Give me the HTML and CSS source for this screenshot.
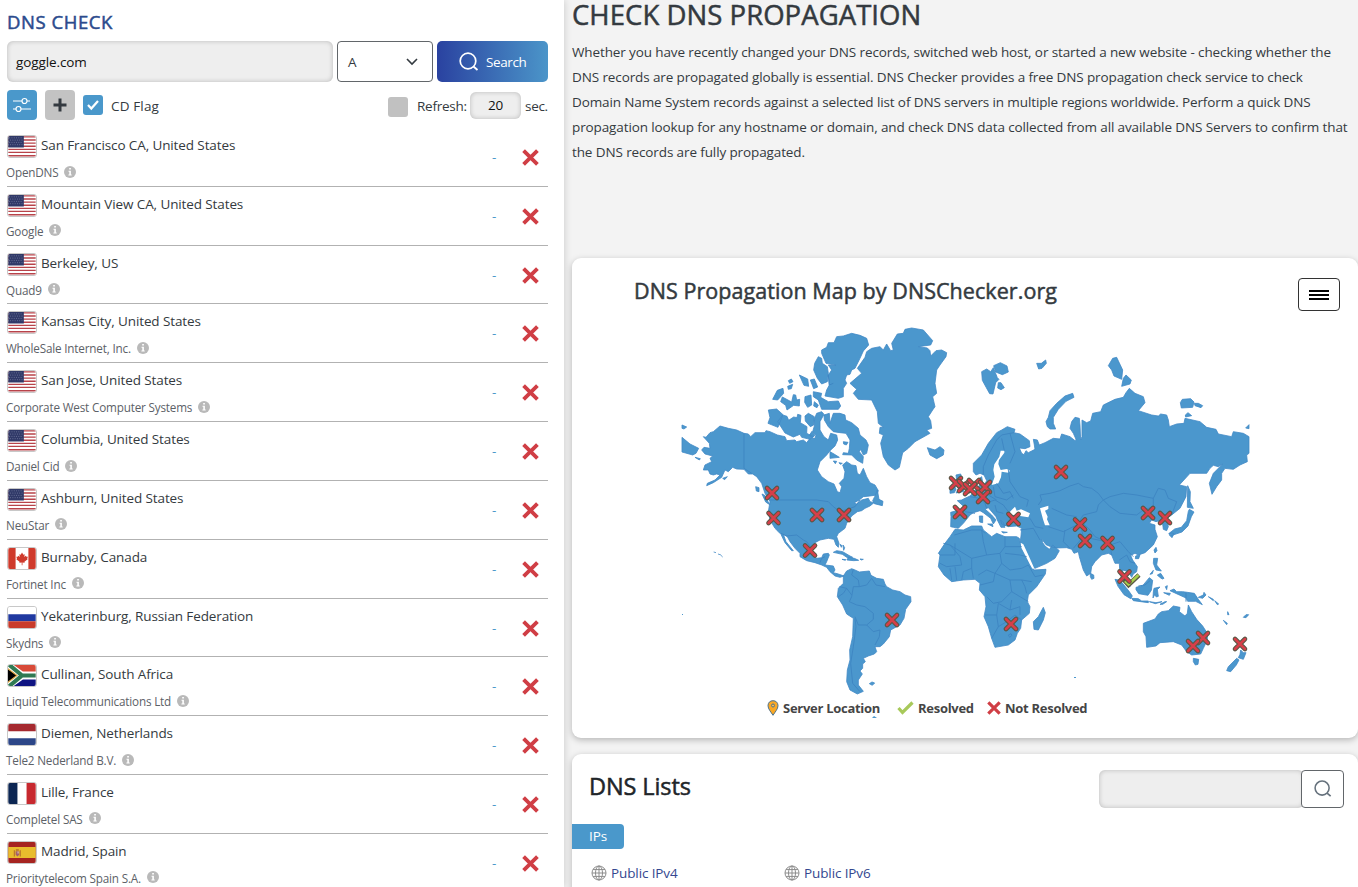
FILE: index.html
```html
<!DOCTYPE html>
<html lang="en">
<head>
<meta charset="utf-8">
<title>DNS Check</title>
<link rel="stylesheet" href="styles.css">
</head>
<body>
<svg class="defs" width="0" height="0">
  <symbol id="us" viewBox="0 0 30 23"><path fill="#fff" d="M0 0h30v23H0z"/><path stroke="#b8434a" stroke-width="1.500" d="M0 1h30M0 4.400h30M0 7.800h30M0 11.200h30M0 14.600h30M0 18h30M0 21.600h30"/><path fill="#303968" d="M0 0h17v12.500H0z"/><path stroke="#8088aa" stroke-width=".8" stroke-dasharray="1 1.500" d="M1 2h15M2 4.500h14M1 7h15M2 9.500h14"/></symbol>
  <symbol id="ca" viewBox="0 0 30 23"><path fill="#fff" d="M0 0h30v23H0z"/><path fill="#cf3a2c" d="M0 0h8v23H0zM22 0h8v23h-8zM15 5l1.500 2.300 1.500-.5-.5 3 1.700-1.300.7 1 1.600 0-.8 2 .5.800-3.500 2.700.2 1.200-2.400-.4v3h-.8v-3l-2.600.4.2-1.200-3.500-2.700.7-.8-.8-2h1.600l.7-1 1.600 1.300-.5-3 1.500.5z"/></symbol>
  <symbol id="ru" viewBox="0 0 30 23"><path fill="#fff" d="M0 0h30v8H0z"/><path fill="#2039a0" d="M0 8h30v7.500H0z"/><path fill="#c93b2b" d="M0 15.500h30V23H0z"/></symbol>
  <symbol id="za" viewBox="0 0 30 23"><path fill="#fff" d="M0 0h30v23H0z"/><path fill="#d84a38" d="M6 0h24v7H16z"/><path fill="#0f1482" d="M6 23h24v-7H16z"/><path fill="none" stroke="#307a53" stroke-width="4.500" d="M0-1l15 12.500L0 24M15 11.500h15"/><path fill="#000" stroke="#e0aa45" stroke-width="1.300" d="M-1 3.500l10.500 8L-1 19.500z"/></symbol>
  <symbol id="nl" viewBox="0 0 30 23"><path fill="#fff" d="M0 0h30v23H0z"/><path fill="#a5292f" d="M0 0h30v8H0z"/><path fill="#2c4688" d="M0 15.500h30V23H0z"/></symbol>
  <symbol id="fr" viewBox="0 0 30 23"><path fill="#fff" d="M0 0h30v23H0z"/><path fill="#0b2552" d="M0 0h10v23H0z"/><path fill="#c7292f" d="M20 0h10v23H20z"/></symbol>
  <symbol id="es" viewBox="0 0 30 23"><path fill="#a62420" d="M0 0h30v23H0z"/><path fill="#e8bd2d" d="M0 5.500h30v12H0z"/><path fill="#b8702a" d="M6 9h1.200v7H6zM12.500 9h1.200v7h-1.200zM8.300 8h3.200v1.500H8.300z"/><path fill="#a2606c" d="M8 10h4v4l-2 2-2-2z"/><path fill="#d9b8a0" d="M10 10.500h1.500v2H10z"/></symbol>
  <symbol id="info" viewBox="0 0 12 12"><circle cx="6" cy="6" r="6" fill="#b9b9b9"/><path fill="#fff" d="M5.200 2h1.700v1.600H5.200zM4.500 4.700h2.400v3.700h.8v1H4.400v-1h.9V5.700h-.8z"/></symbol>
  <symbol id="cross" viewBox="0 0 16 16"><path d="M1.500 1.500l13 13M14.500 1.500l-13 13" stroke="#d03e45" stroke-width="3.600"/></symbol>
  <symbol id="lens" viewBox="0 0 20 20"><circle cx="9" cy="9" r="7.800" fill="none" stroke="currentColor" stroke-width="1.700"/><path d="M14.500 14.500l4 3.500" stroke="currentColor" stroke-width="1.800"/></symbol>
  <symbol id="globe" viewBox="0 0 16 16"><g fill="none" stroke="#8c8c8c"><circle cx="8" cy="8" r="7"/><ellipse cx="8" cy="8" rx="3.500" ry="7"/><path d="M8 1v14M1 8h14M2 4.600h12M2 11.400h12"/></g></symbol>
  <g id="x"><path d="M-5-5L5 5M5-5L-5 5" stroke="#595745" stroke-width="4.600" stroke-linecap="round"/><path d="M-5-5L5 5M5-5L-5 5" stroke="#d63f49" stroke-width="2.500" stroke-linecap="round"/></g>
</svg>
<div class="page">
<section class="panel">
  <h2 class="title">DNS CHECK</h2>
  <div class="query">
    <div class="field host">goggle.com</div>
    <div class="type"><span>A</span><svg width="12" height="8" viewBox="0 0 12 8"><path d="M1 1l5 5 5-5" fill="none" stroke="#343a40" stroke-width="1.600"/></svg></div>
    <div class="search"><svg width="20" height="20"><use href="#lens"/></svg><span>Search</span></div>
  </div>
  <div class="options">
    <div class="btn blue"><svg width="20" height="16" viewBox="0 0 20 16" fill="none" stroke="#fff" stroke-width="1.200"><path d="M1 4h9M15 4h3M1 12h3M9 12h10"/><circle cx="12.500" cy="4" r="2.500"/><circle cx="6.500" cy="12" r="2.500"/></svg></div>
    <div class="btn gray"><svg width="14" height="14"><path d="M7 .5v13M.5 7h13" stroke="#343a40" stroke-width="3"/></svg></div>
    <div class="box on"><svg width="14" height="12" viewBox="0 0 14 12"><path d="M2 6l3.300 3.500L12 2" fill="none" stroke="#fff" stroke-width="2.200"/></svg></div>
    <span class="flag-label">CD Flag</span>
    <div class="box off"></div><span class="refresh">Refresh:</span><div class="field seconds">20</div><span class="sec">sec.</span>
  </div>
  <ul class="servers">
    <li><div><p class="place"><svg class="flag"><use href="#us"/></svg>San Francisco CA, United States</p><p class="isp">OpenDNS<svg class="info"><use href="#info"/></svg></p></div><i>-</i><svg class="cross"><use href="#cross"/></svg></li>
    <li><div><p class="place"><svg class="flag"><use href="#us"/></svg>Mountain View CA, United States</p><p class="isp">Google<svg class="info"><use href="#info"/></svg></p></div><i>-</i><svg class="cross"><use href="#cross"/></svg></li>
    <li><div><p class="place"><svg class="flag"><use href="#us"/></svg>Berkeley, US</p><p class="isp">Quad9<svg class="info"><use href="#info"/></svg></p></div><i>-</i><svg class="cross"><use href="#cross"/></svg></li>
    <li><div><p class="place"><svg class="flag"><use href="#us"/></svg>Kansas City, United States</p><p class="isp">WholeSale Internet, Inc.<svg class="info"><use href="#info"/></svg></p></div><i>-</i><svg class="cross"><use href="#cross"/></svg></li>
    <li><div><p class="place"><svg class="flag"><use href="#us"/></svg>San Jose, United States</p><p class="isp">Corporate West Computer Systems<svg class="info"><use href="#info"/></svg></p></div><i>-</i><svg class="cross"><use href="#cross"/></svg></li>
    <li><div><p class="place"><svg class="flag"><use href="#us"/></svg>Columbia, United States</p><p class="isp">Daniel Cid<svg class="info"><use href="#info"/></svg></p></div><i>-</i><svg class="cross"><use href="#cross"/></svg></li>
    <li><div><p class="place"><svg class="flag"><use href="#us"/></svg>Ashburn, United States</p><p class="isp">NeuStar<svg class="info"><use href="#info"/></svg></p></div><i>-</i><svg class="cross"><use href="#cross"/></svg></li>
    <li><div><p class="place"><svg class="flag"><use href="#ca"/></svg>Burnaby, Canada</p><p class="isp">Fortinet Inc<svg class="info"><use href="#info"/></svg></p></div><i>-</i><svg class="cross"><use href="#cross"/></svg></li>
    <li><div><p class="place"><svg class="flag"><use href="#ru"/></svg>Yekaterinburg, Russian Federation</p><p class="isp">Skydns<svg class="info"><use href="#info"/></svg></p></div><i>-</i><svg class="cross"><use href="#cross"/></svg></li>
    <li><div><p class="place"><svg class="flag"><use href="#za"/></svg>Cullinan, South Africa</p><p class="isp">Liquid Telecommunications Ltd<svg class="info"><use href="#info"/></svg></p></div><i>-</i><svg class="cross"><use href="#cross"/></svg></li>
    <li><div><p class="place"><svg class="flag"><use href="#nl"/></svg>Diemen, Netherlands</p><p class="isp">Tele2 Nederland B.V.<svg class="info"><use href="#info"/></svg></p></div><i>-</i><svg class="cross"><use href="#cross"/></svg></li>
    <li><div><p class="place"><svg class="flag"><use href="#fr"/></svg>Lille, France</p><p class="isp">Completel SAS<svg class="info"><use href="#info"/></svg></p></div><i>-</i><svg class="cross"><use href="#cross"/></svg></li>
    <li><div><p class="place"><svg class="flag"><use href="#es"/></svg>Madrid, Spain</p><p class="isp">Prioritytelecom Spain S.A.<svg class="info"><use href="#info"/></svg></p></div><i>-</i><svg class="cross"><use href="#cross"/></svg></li>
  </ul>
</section>
<main class="main">
  <h1>CHECK DNS PROPAGATION</h1>
  <p class="intro">Whether you have recently changed your DNS records, switched web host, or started a new website - checking whether the<br>DNS records are propagated globally is essential. DNS Checker provides a free DNS propagation check service to check<br>Domain Name System records against a selected list of DNS servers in multiple regions worldwide. Perform a quick DNS<br>propagation lookup for any hostname or domain, and check DNS data collected from all available DNS Servers to confirm that<br>the DNS records are fully propagated.</p>
  <section class="card map-card">
    <div class="map-head"><h3>DNS Propagation Map by DNSChecker.org</h3><div class="menu"><svg width="20" height="10"><path d="M0 1h20M0 5h20M0 9h20" stroke="#000" stroke-width="2"/></svg></div></div>
    <svg class="map" width="572" height="400" viewBox="680 320 572 400">
      <g class="land" transform="translate(670 320) scale(.33333)">
        <path d="M100 350L108 352 120 338 130 335 150 318 175 325 200 330 222 340 235 342 242 350 255 338 285 338 288 332 300 335 322 345 345 350 350 362 375 360 380 365 400 360 410 368 420 355 435 355 438 345 428 335 433 318 432 300 440 280 455 275 462 283 450 305 450 330 462 350 475 360 482 340 500 345 503 360 495 378 480 392 470 405 450 425 442 450 455 470 475 485 492 492 502 515 510 518 515 500 508 490 522 475 525 455 518 435 530 425 545 435 558 437 562 460 570 465 580 445 590 470 600 488 615 495 625 512 620 525 600 528 580 530 568 540 553 548 560 552 575 540 595 535 600 545 612 548 600 558 585 565 575 572 562 575 545 588 530 610 525 625 505 640 500 650 507 670 505 682 498 675 492 658 475 655 450 660 435 668 428 685 425 705 440 715 455 713 460 702 475 700 478 705 470 725 465 735 490 738 495 750 490 758 505 762 522 768 510 772 495 768 480 755 470 742 455 735 435 728 410 722 390 710 390 700 375 685 360 665 352 650 340 643 348 665 370 692 365 692 345 668 333 643 325 635 315 625 300 600 295 575 300 545 285 520 275 490 260 470 248 462 235 462 222 448 200 447 188 442 175 455 165 450 155 472 130 488 110 497 112 490 135 480 150 465 140 462 130 465 120 462 115 450 100 450 105 435 125 425 120 415 128 408 105 402 95 390 102 382 120 385 118 370Z"/>
        <path d="M36 352L60 372 86 385 78 400 68 405 36 396ZM36 315l14 6-8 6-6-2zM75 412l16 4-3 4zM158 475l14-5-8 9zM257 500l10 3v12l-8-2zM276 522l8 4 15 28-12-8z"/>
        <path d="M455 90L470 82 475 68 492 68 500 50 520 48 545 40 570 46 590 55 596 75 580 93 570 115 555 145 545 150 540 163 530 165 525 180 530 190 520 205 520 230 505 235 465 228 470 210 478 195 475 165 485 150 475 135 498 136 468 130 455 100ZM445 110L455 115 457 130 472 140 475 160 472 185 455 192 442 175 431 150 434 130Z"/>
        <path d="M430 215L455 220 452 232 475 245 505 243 512 258 505 268 455 268 445 240 430 230zM405 230l18-5 2 30-12 7-9-15zM388 165l25 12 3 22-14-3zM421 180l12-3 10 24-12 5zM433 245l12 10-4 8-10-5zM355 182l9-5 5 8-10 5zM353 199l15-6-4 13-9 2zM308 238l14-27 17-6 2 15-18 20zM332 245l5-14 28 15 5-22 7 1 3 15 9-2-1 20-17-2-20 14-4-14zM295 270l25-3 19 17-15 38-30-12 6-17zM323 305l15-20 13 4 5 12 15-10 10 2 2-10 10 3-2 22 20 12-1 20 20 10-10 8-25-6-5-9-20 8-25-12zM405 288l10-8 18 10-2 25-10 5-15-17zM418 346l8-12 9 12-8 7z"/>
        <path d="M462 285L478 280 480 310 490 280 510 280 525 285 527 300 545 308 565 325 570 345 588 360 595 375 590 400 580 405 572 388 568 395 580 410 578 430 560 420 545 405 518 404 520 398 535 400 538 385 540 360 528 340 510 338 490 335 475 320 463 300ZM480 395L492 402 508 412 480 415zM490 423l10 1-4 7zM507 428l10 2-6 3zM520 365l14 2-5 8-8-3zM608 542l6-12 8-20 5 28 12 6-2 13-24-6zM490 697l10-5 18 3 22 13 8 4-16 1-15-10zM516 718l12 1-2 2zM535 712l18 3 13 6-15 1-20-2zM570 717l10 1-6 2zM510 673l6 4-2 5zM519 675l5 8-3 8zM131 696l7 2M144 702l6 2M150 703l8 8M598 1091l8-5 8 3-7 7z"/>
      </g>
      <g class="land" transform="translate(700 490) scale(.33333)">
        <path d="M430 258L440 243 455 236 465 240 478 246 508 243 513 256 530 265 550 268 555 282 560 290 578 300 600 305 615 315 632 320 633 335 617 358 612 385 600 405 590 410 572 420 568 440 550 462 540 470 525 470 530 485 523 492 505 498 490 505 496 515 488 522 488 535 480 543 487 552 475 570 475 585 490 604 472 612 450 600 440 575 442 540 450 510 449 480 458 440 460 385 440 372 428 345 412 320 415 295 430 280Z"/>
      </g>
      <g class="land" transform="translate(840 320) scale(.33333)">
        <path d="M30 190L65 160 52 145 75 112 80 95 95 85 120 80 130 90 140 72 152 92 160 90 155 70 172 42 190 40 195 28 215 24 250 30 278 62 272 75 235 80 262 84 270 92 272 108 288 92 305 90 320 98 318 110 300 135 290 150 285 190 290 220 278 230 285 260 278 270 265 290 272 302 275 325 260 330 270 340 225 365 205 385 188 398 178 442 165 450 145 435 130 410 122 370 130 345 118 340 120 322 130 322 115 310 112 275 95 240 55 238 40 220 50 208ZM262 383L285 390 300 380 312 390 310 405 290 416 270 405zM425 155l15-8 12 8 8-12 12 30 5 5-10 10-8 34-10-1-10-18-12-22zM461 137l20-9 20 10 4 18-18 8-20-8zM475 188l8 0 10 15-10 6-10-5zM590 130l14 0 13-10 2 10-13 15-10 2z"/>
      </g>
      <g class="land" transform="translate(920 420) scale(.33333)">
        <path d="M92 320L93 290 92 277 110 272 132 275 132 260 112 242 125 240 135 235 150 228 172 205 182 190 175 178 185 170 188 187 194 193 200 182 192 165 180 160 168 165 160 155 160 130 185 105 205 70 230 38 245 30 262 20 285 28 282 38 300 42 328 62 330 80 315 86 298 84 305 100 312 104 318 92 325 98 345 88 343 75 340 58 352 60 358 75 375 68 400 55 420 57 425 42 450 50 465 62 468 58 460 40 450 25 455 5 465 -8 478 -5 480 15 482 60 486 50 486 0 500 8 512 3 518 -20 542 -25 550 -45 585 -62 610 -68 618 -82 628 -95 645 -80 670 -70 675 -52 655 -28 695 -15 715 -12 722 -18 740 -15 745 0 748 20 770 12 792 10 795 -5 840 5 860 22 888 28 895 42 935 50 940 35 970 40 987 50 987 100 980 105 982 125 960 135 940 148 915 145 905 160 905 180 890 200 876 223 868 190 880 160 908 132 895 140 880 136 870 145 860 160 810 160 778 195 800 200 798 230 780 265 755 285 740 295 745 320 740 332 730 328 728 312 715 303 708 305 695 300 688 310 705 315 705 328 712 350 700 375 675 398 655 405 645 400 632 406 638 420 652 440 650 455 640 462 635 472 625 455 608 450 608 470 622 480 630 500 612 482 600 465 598 430 585 430 575 405 565 400 545 405 525 425 515 440 512 460 500 468 490 450 478 410 475 395 462 400 455 388 440 383 410 384 392 380 378 374 366 358 368 368 375 378 388 388 398 375 418 392 405 415 380 430 345 445 338 440 320 405 300 370 303 348 305 325 290 318 265 320 245 312 242 300 250 308 255 322 243 322 232 300 228 290 205 263 195 267 215 285 228 300 220 312 212 295 190 278 180 272 160 278 150 285 130 310 115 325 100 322Z"/>
        <path d="M105 328L130 330 155 318 185 318 190 330 215 350 230 340 255 350 290 350 298 355 302 375 318 410 330 435 342 450 378 448 376 462 350 500 325 525 322 545 330 560 328 580 305 600 302 625 292 640 285 660 265 675 225 682 215 655 205 620 192 590 198 560 195 530 178 510 180 490 165 478 130 480 95 485 72 465 55 440 60 405 55 400 75 370 90 350Z"/>
        <path d="M340 605L355 590 370 562 376 578 370 600 355 630 342 628ZM511 460l10 5 1 10-7 3-4-8zM108 165l14-3 3 10-7 6 17 25-5 12-22 4 8-12-8-10 3-9zM90 205l12-10 6 13-5 10-13 2zM178 288l10 0 0 20-9-2zM203 312l14 0 2 8zM245 335l17 2-12 2z"/>
      </g>
      <g class="land" transform="translate(1040 340) scale(.33333)">
        <path d="M18 245L25 232 30 212 50 190 75 168 98 160 102 172 78 184 55 208 40 232 40 250 47 267 30 267 22 260ZM205 77L218 55 230 52 248 90 245 118 222 108 215 90ZM258 105L274 120 270 132 245 139 250 115zM421 188l6-10 25-2 10 10-4 16-34 2zM463 190l12 0 13 7-5 6-18-6zM436 225l8-7 11 9-18 4zM617 264l10-10 0 12zM443 437l8 18-1 30 10 20-18-3zM448 508l14 8-8 14-10 28-18 18-30 10-10-5 18-14 20-5 16-20 5-28zM392 578l10 3-6 12-8-8z"/>
      </g>
      <g class="land" transform="translate(1080 490) scale(.33333)">
        <path d="M190 400L225 387 235 372 245 365 265 362 280 348 300 352 298 365 315 378 322 370 325 345 335 365 350 388 368 408 382 430 382 450 370 475 362 492 335 495 320 485 305 465 280 455 240 458 228 468 200 472 198 440 190 425ZM340 505l16 3-2 15-8 2-6-10zM482 480l8 8 8 0-8 20-15-5 5-10zM470 505l7 5-8 15-17 20-12-3 5-12zM105 268l15 3 25 30 12 17-5 8-20-12-18-25zM155 325l20 1 10 7 20 0 0 5-45-6zM168 292l20-5 20-24 10 8-4 30-10 15-28-5-8-12zM222 295l18-4-8 8 3 20-6 2-5-7-5 10 1-18zM256 290l6-3-2 12zM251 308l20 2-3 6zM221 205l12 0-3 20 14 18-16-3-8-20zM232 255l10-5 10 15-5 2-8-5zM222 180l6-8 3 10-6 7zM167 198l13-4-4 12-10 0zM208 335l20 3 18-3-20 6zM240 343l15-8 5 0-12 8zM210 253l10-12-3 10zM270 302l12-5 8 8 18 0 35 5 12 18 12 16-20-10-24 0-5-10-20-9zM355 322l15-7 2-8 6 8-10 10zM385 320l15 8 0 4zM404 332l12 10-4 2zM443 365l4 9-4 0zM430 391l12 9-2 4zM490 382l8-8 8 0-8 9z"/>
      </g>
      <path fill="#4b97cd" d="M682 614h1v1h-1zM1074 677h2v1h-2zM872 718l2-2 3 2z"/>
      <g class="water" transform="translate(920 420) scale(.33333)">
        <path d="M242 92L253 92 253 98 237 120 235 132 242 150 260 147 270 152 265 158 245 155 243 172 235 190 215 195 224 170 220 150 223 133 238 110ZM270 275L285 260 290 272 303 268 315 273 330 280 325 292 300 288 280 285 270 290zM360 265l25-8 0 10-10 5 8 18-2 8 8 18-14 0-6-18zM302 368l8 5 15 32 17 38-5 3-15-28-18-35z"/>
      </g>
      <g class="borders">
        <path transform="translate(670 320) scale(.33333)" d="M222 340L222 445 245 460M300 540L440 540 475 545 490 560 510 575 555 560 570 540M333 640L350 648 380 645 400 660 410 665 425 685M450 728L455 715 465 710M475 165L478 195 490 190"/>
        <path transform="translate(700 490) scale(.33333)" d="M460 238L455 255 475 270 478 290 460 290 455 320 448 335 470 345 495 350 520 370 520 388 500 405 475 405 465 380M478 290L500 285 515 265 528 285 555 290M465 385L468 410 460 470 452 520 458 580 480 605M500 405L520 425 540 420 538 440 525 465M418 290L440 295 455 315M415 320L430 310 440 295"/>
        <path transform="translate(920 420) scale(.33333)" d="M190 165L190 140 205 105 230 60 245 45 270 40 282 38M245 55L253 92M270 40L285 95 270 130M265 150L270 185 300 230 325 240 320 260M230 190L250 220 270 215 280 235M220 200L225 230 260 240 280 225M200 190L205 225 230 240M150 230L180 235 195 250 225 240 250 255 265 275M135 275L165 280M225 255L230 275 250 280M195 250L200 265M355 255L365 240 360 225 390 220 420 212 450 198 475 190 490 200 515 205 535 220 550 240 535 255 530 275 490 285 480 300 510 330 525 350 570 370M550 240L570 260 600 280 650 285 670 270 700 260 700 235 650 225 610 220 570 230 550 240M700 235L715 205 735 210 745 235 770 245 755 285M395 265L440 285 470 290M385 320L430 335 470 315M330 295L345 320 370 325M300 330L340 325 360 360M435 330L430 365 450 385M460 385L490 350 485 330M510 355L560 365M575 405L570 375 600 365 625 395 640 410M598 420L620 405 630 425 645 430"/>
        <path transform="translate(920 420) scale(.33333)" d="M103 345L155 330 185 330 190 365 200 405 155 415 90 375 70 370M60 405L105 405 105 370M90 375L120 410 125 435 80 440 60 430M155 415L155 445 130 455 125 480M185 330L195 340M200 405L240 400 255 380 255 350M255 380L305 380M255 400L300 405 320 410M240 400L245 430 225 460 200 450 175 465M245 430L270 450 305 445 325 435M180 495L220 485 225 460 270 480 275 515 245 545 220 550 200 530M270 480L305 480 315 500 320 520M275 515L300 530 325 545M195 585L230 585 235 550 270 570 275 540M230 585L235 620 215 655M235 620L260 605 285 585 305 600M270 570L300 560 300 585M155 445L160 475M90 445L95 480M105 440L110 480M325 435L345 470 370 465M305 480L335 485M265 645l8-4 3 5-7 6z"/>
        <path transform="translate(1080 490) scale(.33333)" d="M318 308L318 335M175 288L195 285 210 272"/>
      </g>
      <g><use href="#x" x="772" y="493"/><use href="#x" x="773.500" y="518"/><use href="#x" x="817" y="515"/><use href="#x" x="844" y="515"/><use href="#x" x="810" y="550.500"/><use href="#x" x="892" y="620"/><use href="#x" x="956" y="483"/><use href="#x" x="964" y="486"/><use href="#x" x="974" y="485"/><use href="#x" x="970" y="489"/><use href="#x" x="985" y="487"/><use href="#x" x="983" y="497"/><use href="#x" x="960" y="512"/><use href="#x" x="1013.500" y="519"/><use href="#x" x="1061" y="472"/><use href="#x" x="1080" y="524.500"/><use href="#x" x="1085" y="541"/><use href="#x" x="1107.500" y="543"/><use href="#x" x="1011" y="624"/><use href="#x" x="1148" y="513"/><use href="#x" x="1165" y="518"/><path fill="none" stroke="#595745" stroke-width="4.500" d="M1124 580l4.500 5 10.500-10"/><path fill="none" stroke="#a9cf4c" stroke-width="2.600" d="M1125 581l3.500 3.500 10-9.500"/><use href="#x" x="1124.500" y="576.500"/><use href="#x" x="1203" y="638"/><use href="#x" x="1193" y="646"/><use href="#x" x="1240" y="644"/></g>
    </svg>
    <div class="legend">
      <svg width="12" height="16" viewBox="0 0 12 16"><path d="M6 .7c3 0 5 2 5 5 0 3.300-3 6.300-5 9.600C4 12 1 9 1 5.700c0-3 2-5 5-5z" fill="#f9a825" stroke="#4d7390"/><circle cx="6" cy="5.500" r="1.500" fill="#f6bd58" stroke="#4d7390"/></svg><b class="l1">Server Location</b>
      <svg width="17" height="14"><path d="M1.500 7l4 4.500L15.500 1.500" fill="none" stroke="#a8c95a" stroke-width="3.200"/></svg><b class="l2">Resolved</b>
      <svg width="14" height="14"><use href="#cross"/></svg><b>Not Resolved</b>
    </div>
  </section>
  <section class="card lists">
    <div class="lists-head"><h3>DNS Lists</h3><div class="find"><div class="field"></div><div class="find-btn"><svg width="18" height="18"><use href="#lens"/></svg></div></div></div>
    <div class="tag">IPs</div>
    <div class="links"><a><svg width="16" height="16"><use href="#globe"/></svg>Public IPv4</a><a><svg width="16" height="16"><use href="#globe"/></svg>Public IPv6</a></div>
  </section>
</main>
</div>
</body>
</html>
```
FILE: styles.css
```css
* { box-sizing: border-box; }
body { margin: 0; background: #f3f3f3; color: #343a40; font: 13.500px/20px "Open Sans", "Noto Sans", sans-serif; letter-spacing: -.11px; }
h1, h2, h3, p, ul { margin: 0; padding: 0; font-weight: 400; }
h1, h2, h3 { -webkit-text-stroke: .5px currentColor; }
svg { flex: none; }
.defs { display: block; height: 0; }
.page { display: flex; height: 887px; overflow: hidden; }
.panel { width: 564px; flex: none; padding: 10px 16px 0 7px; background: #fff; box-shadow: 0 0 8px rgba(0,0,0,.18); }
.title { height: 31px; color: #2b4b8d; font-size: 18.500px; line-height: 23px; letter-spacing: .55px; }
.query { display: flex; gap: 4px; height: 41px; }
.field { background: #eee; border-radius: 6px; box-shadow: inset 0 0 5px rgba(0,0,0,.22); color: #111; }
.host { width: 326px; padding: 11px 9px; }
.type { width: 96px; border: 1px solid #62666a; border-radius: 4px; display: flex; align-items: center; justify-content: space-between; padding: 0 14px 0 10px; }
.search { width: 111px; border-radius: 5px; display: flex; align-items: center; gap: 7px; padding-left: 22px; background: linear-gradient(90deg, #2a42a0, #4b95c9); color: #fff; letter-spacing: -.4px; }
.options { display: flex; align-items: center; height: 30px; margin-top: 8px; white-space: nowrap; }
.btn { width: 30px; height: 30px; border-radius: 4px; display: flex; align-items: center; justify-content: center; margin-right: 8px; }
.blue { background: #4a98cb; }
.gray { background: #c3c3c3; }
.box { width: 20px; height: 20px; border-radius: 3px; display: flex; align-items: center; justify-content: center; }
.on { background: #4a98cb; margin-right: 8px; }
.off { background: #c1c1c1; margin: 4px 9px 0 auto; }
.options span { padding-top: 2px; }
.flag-label { letter-spacing: .15px; }
.refresh { width: 49px; letter-spacing: -.25px; }
.sec { width: 23px; letter-spacing: -.3px; }
.seconds { width: 51px; height: 27px; margin: 0 4px; text-align: center; line-height: 27px; }
.servers { list-style: none; margin-top: 8px; }
.servers li { display: flex; height: 58.820px; border-bottom: 1px solid #b2b2b2; padding-top: 7px; align-items: flex-start; }
.servers li > div { flex: 1; }
.place { display: flex; height: 22px; line-height: 20px; white-space: nowrap; }
.flag { width: 30px; height: 23px; border: 1px solid #c8c8c8; border-radius: 3px; margin-right: 4px; }
.isp { display: flex; align-items: center; height: 20px; margin: 5px 0 0 -1px; font-size: 11.700px; letter-spacing: -.17px; color: #5c6167; white-space: nowrap; }
.info { width: 12px; height: 12px; margin: -1px 0 0 6px; }
.servers i { width: 30px; color: #4a98cb; font-style: normal; margin-top: 12px; }
.cross { width: 17px; height: 17px; margin: 14px 9px 0 0; }
.main { width: 786px; flex: none; margin-left: 8px; }
h1 { height: 40px; font-size: 27.500px; line-height: 30px; letter-spacing: .05px; white-space: nowrap; }
.intro { height: 218px; line-height: 24.900px; letter-spacing: -.115px; white-space: nowrap; }
.card { background: #fff; border-radius: 9px; box-shadow: 0 2px 6px rgba(0,0,0,.25); }
.map-card { height: 480px; padding-top: 20px; }
.map-head { display: flex; justify-content: space-between; height: 42px; padding: 0 18px 0 62px; }
.map-head h3 { font-size: 21.500px; line-height: 25px; letter-spacing: .06px; white-space: nowrap; }
.menu { width: 42px; height: 33px; border: 1px solid #333; border-radius: 4px; display: flex; align-items: center; justify-content: center; }
.map { display: block; margin-left: 108px; }
.land path { fill: #4b97cd; stroke: #4189c5; stroke-width: .8; vector-effect: non-scaling-stroke; }
.water { fill: #fff; }
.borders { fill: none; stroke: #3d84c2; }
.borders path { vector-effect: non-scaling-stroke; stroke-width: .9; }
.legend { position: relative; display: flex; align-items: center; height: 20px; margin: -22px 0 0 195px; color: #454545; font-size: 13px; letter-spacing: -.28px; white-space: nowrap; }
.legend svg { margin-right: 4px; }
.legend b { width: 84px; }
.legend .l1 { width: 97px; margin-right: 17px; }
.legend .l2 { width: 55px; margin-right: 14px; }
.lists { height: 160px; margin-top: 16px; }
.lists-head { display: flex; justify-content: space-between; height: 70px; padding: 16px 14px 0 17px; }
.lists-head h3 { color: #212529; font-size: 23.500px; line-height: 33px; letter-spacing: -.1px; }
.find { display: flex; }
.find .field { width: 205px; height: 38px; margin-right: -3px; }
.find-btn { position: relative; width: 43px; height: 38px; background: #fff; border: 1px solid #62666a; border-radius: 4px; color: #65717c; display: flex; align-items: center; justify-content: center; }
.tag { width: 52px; height: 25px; border-radius: 0 4px 4px 0; background: #4a98cb; color: #fff; text-align: center; line-height: 25px; }
.links { display: flex; margin-top: 14px; padding-left: 19px; color: #34478f; }
.links a { display: flex; align-items: center; gap: 4px; width: 193px; }
```
